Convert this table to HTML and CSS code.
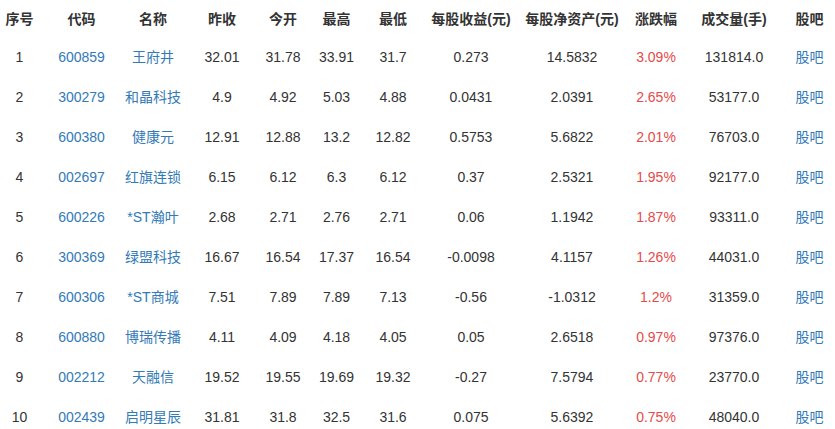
FILE: index.html
```html
<!DOCTYPE html>
<html lang="zh">
<head>
<meta charset="utf-8">
<title>涨幅榜</title>
<link rel="stylesheet" href="styles.css">
</head>
<body>
<table class="stock-table">
  <colgroup>
    <col class="c-no"><col class="c-code"><col class="c-name"><col class="c-prev"><col class="c-open"><col class="c-high"><col class="c-low"><col class="c-eps"><col class="c-nav"><col class="c-chg"><col class="c-vol"><col class="c-bar">
  </colgroup>
  <thead>
    <tr><th>序号</th><th>代码</th><th>名称</th><th>昨收</th><th>今开</th><th>最高</th><th>最低</th><th>每股收益(元)</th><th>每股净资产(元)</th><th>涨跌幅</th><th>成交量(手)</th><th class="last">股吧</th></tr>
  </thead>
  <tbody>
    <tr><td>1</td><td><a href="#">600859</a></td><td><a href="#">王府井</a></td><td>32.01</td><td>31.78</td><td>33.91</td><td>31.7</td><td>0.273</td><td>14.5832</td><td class="up">3.09%</td><td>131814.0</td><td class="last"><a href="#">股吧</a></td></tr>
    <tr><td>2</td><td><a href="#">300279</a></td><td><a href="#">和晶科技</a></td><td>4.9</td><td>4.92</td><td>5.03</td><td>4.88</td><td>0.0431</td><td>2.0391</td><td class="up">2.65%</td><td>53177.0</td><td class="last"><a href="#">股吧</a></td></tr>
    <tr><td>3</td><td><a href="#">600380</a></td><td><a href="#">健康元</a></td><td>12.91</td><td>12.88</td><td>13.2</td><td>12.82</td><td>0.5753</td><td>5.6822</td><td class="up">2.01%</td><td>76703.0</td><td class="last"><a href="#">股吧</a></td></tr>
    <tr><td>4</td><td><a href="#">002697</a></td><td><a href="#">红旗连锁</a></td><td>6.15</td><td>6.12</td><td>6.3</td><td>6.12</td><td>0.37</td><td>2.5321</td><td class="up">1.95%</td><td>92177.0</td><td class="last"><a href="#">股吧</a></td></tr>
    <tr><td>5</td><td><a href="#">600226</a></td><td><a href="#">*ST瀚叶</a></td><td>2.68</td><td>2.71</td><td>2.76</td><td>2.71</td><td>0.06</td><td>1.1942</td><td class="up">1.87%</td><td>93311.0</td><td class="last"><a href="#">股吧</a></td></tr>
    <tr><td>6</td><td><a href="#">300369</a></td><td><a href="#">绿盟科技</a></td><td>16.67</td><td>16.54</td><td>17.37</td><td>16.54</td><td>-0.0098</td><td>4.1157</td><td class="up">1.26%</td><td>44031.0</td><td class="last"><a href="#">股吧</a></td></tr>
    <tr><td>7</td><td><a href="#">600306</a></td><td><a href="#">*ST商城</a></td><td>7.51</td><td>7.89</td><td>7.89</td><td>7.13</td><td>-0.56</td><td>-1.0312</td><td class="up">1.2%</td><td>31359.0</td><td class="last"><a href="#">股吧</a></td></tr>
    <tr><td>8</td><td><a href="#">600880</a></td><td><a href="#">博瑞传播</a></td><td>4.11</td><td>4.09</td><td>4.18</td><td>4.05</td><td>0.05</td><td>2.6518</td><td class="up">0.97%</td><td>97376.0</td><td class="last"><a href="#">股吧</a></td></tr>
    <tr><td>9</td><td><a href="#">002212</a></td><td><a href="#">天融信</a></td><td>19.52</td><td>19.55</td><td>19.69</td><td>19.32</td><td>-0.27</td><td>7.5794</td><td class="up">0.77%</td><td>23770.0</td><td class="last"><a href="#">股吧</a></td></tr>
    <tr><td>10</td><td><a href="#">002439</a></td><td><a href="#">启明星辰</a></td><td>31.81</td><td>31.8</td><td>32.5</td><td>31.6</td><td>0.075</td><td>5.6392</td><td class="up">0.75%</td><td>48040.0</td><td class="last"><a href="#">股吧</a></td></tr>
  </tbody>
</table>
</body>
</html>
```
FILE: styles.css
```css
html, body {
  margin: 0;
  padding: 0;
  background: #fff;
}
body {
  font-family: "Liberation Sans", Arial, "Noto Sans CJK SC", sans-serif;
  font-size: 14px;
  color: #333;
}
.stock-table {
  width: 835px;
  table-layout: fixed;
  border-collapse: collapse;
  border-spacing: 0;
}
.c-no { width: 39px; }
.c-code { width: 85px; }
.c-name { width: 58px; }
.c-prev { width: 80px; }
.c-open { width: 42px; }
.c-high { width: 65px; }
.c-low { width: 48px; }
.c-eps { width: 108px; }
.c-nav { width: 94px; }
.c-chg { width: 74px; }
.c-vol { width: 82px; }
.c-bar { width: 60px; }
.stock-table th,
.stock-table td {
  padding: 0;
  text-align: center;
  vertical-align: middle;
  white-space: nowrap;
  line-height: 20px;
}
.stock-table th {
  height: 37px;
  font-weight: bold;
  color: #333;
}
.stock-table td {
  height: 40px;
}
.stock-table .last {
  padding-left: 9px;
}
.stock-table a {
  color: #337ab7;
  text-decoration: none;
}
.stock-table .up {
  color: #e64a4a;
}
```
